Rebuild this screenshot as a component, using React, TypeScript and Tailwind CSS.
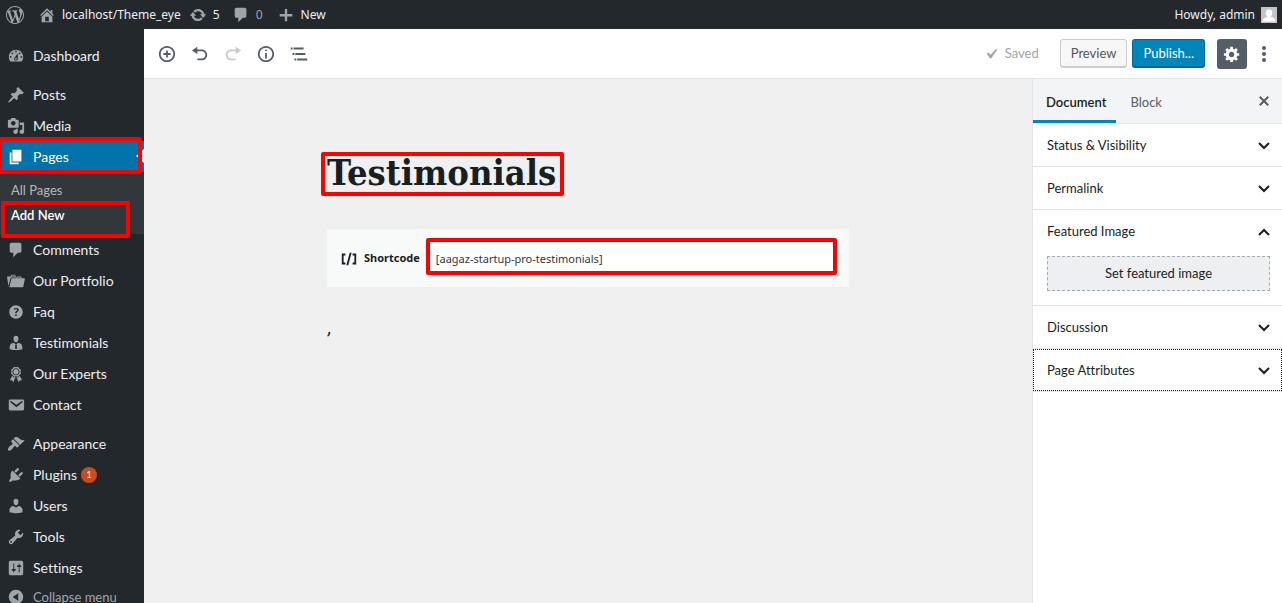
import { useState, type ReactNode } from "react";

const PATHS = {
  wordpress:
    "M20 10c0-5.51-4.49-10-10-10C4.48 0 0 4.49 0 10c0 5.52 4.48 10 10 10 5.51 0 10-4.48 10-10zM7.78 15.37L4.37 6.22c.55-.02 1.17-.08 1.17-.08.5-.06.44-1.13-.06-1.11 0 0-1.45.11-2.37.11-.18 0-.37 0-.58-.01C4.12 2.69 6.87 1.11 10 1.11c2.33 0 4.45.87 6.05 2.34-.68-.11-1.65.39-1.65 1.58 0 .74.45 1.36.9 2.1.35.61.55 1.36.55 2.46 0 1.49-1.4 5-1.4 5l-3.03-8.37c.54-.02.82-.17.82-.17.5-.05.44-1.25-.06-1.22 0 0-1.44.12-2.38.12-.87 0-2.33-.12-2.33-.12-.5-.03-.56 1.2-.06 1.22l.92.08 1.26 3.41zM17.41 10c.24-.64.74-1.87.43-4.25.7 1.29 1.05 2.71 1.05 4.25 0 3.29-1.73 6.24-4.4 7.78.97-2.59 1.94-5.2 2.92-7.78zM6.1 18.09C3.12 16.65 1.11 13.53 1.11 10c0-1.3.23-2.48.72-3.59C3.25 10.3 4.67 14.2 6.1 18.09zm4.03-6.63l2.58 6.98c-.86.29-1.76.45-2.71.45-.79 0-1.57-.11-2.29-.33.81-2.38 1.62-4.74 2.42-7.1z",
  home: "M16 8.5l1.53 1.53-1.06 1.06L10 4.6l-6.47 6.49-1.06-1.06L10 2.5l4 4v-2h2v4zm-6-2.46l6 5.99V18H4v-5.97zM12 17v-5H8v5h4z",
  update:
    "M10.2 3.28c3.53 0 6.43 2.61 6.92 6h2.08l-3.5 4-3.5-4h2.32c-.45-1.97-2.21-3.45-4.32-3.45-1.45 0-2.73.71-3.54 1.78L4.95 5.66C6.23 4.2 8.11 3.28 10.2 3.28zm-.4 13.44c-3.52 0-6.43-2.61-6.92-6H.8l3.5-4c1.17 1.33 2.33 2.67 3.5 4H5.48c.45 1.97 2.21 3.45 4.32 3.45 1.45 0 2.73-.71 3.54-1.78l1.71 1.95c-1.28 1.46-3.15 2.38-5.25 2.38z",
  plus: "M17 9v2.6h-5.7V17H8.7v-5.4H3V9h5.7V3.2h2.6V9z",
  dashboard:
    "M3.76 16h12.48c1.1-1.37 1.76-3.11 1.76-5 0-4.42-3.58-8-8-8s-8 3.58-8 8c0 1.89.66 3.63 1.76 5zM10 4c.55 0 1 .45 1 1s-.45 1-1 1-1-.45-1-1 .45-1 1-1zM6 6c.55 0 1 .45 1 1s-.45 1-1 1-1-.45-1-1 .45-1 1-1zm8 0c.55 0 1 .45 1 1s-.45 1-1 1-1-.45-1-1 .45-1 1-1zm-5.37 5.55L12 7v6c0 1.1-.9 2-2 2s-2-.9-2-2c0-.57.24-1.08.63-1.45zM4 10c.55 0 1 .45 1 1s-.45 1-1 1-1-.45-1-1 .45-1 1-1zm12 0c.55 0 1 .45 1 1s-.45 1-1 1-1-.45-1-1 .45-1 1-1zm-5 3c0-.55-.45-1-1-1s-1 .45-1 1 .45 1 1 1 1-.45 1-1z",
  post: "M10.44 3.02l1.82-1.82 6.36 6.35-1.83 1.82c-1.05-.68-2.48-.57-3.41.36l-.75.75c-.92.93-1.04 2.35-.35 3.41l-1.83 1.82-2.41-2.41-2.8 2.79c-.42.42-3.38 2.71-3.8 2.29s1.86-3.39 2.28-3.81l2.79-2.79L4.1 9.36l1.83-1.82c1.05.69 2.48.57 3.4-.36l.75-.75c.93-.92 1.05-2.35.36-3.41z",
  media:
    "M13 11V4c0-.55-.45-1-1-1h-1.67L9 1H5L3.67 3H2c-.55 0-1 .45-1 1v7c0 .55.45 1 1 1h10c.55 0 1-.45 1-1zM7 4.5c1.38 0 2.5 1.12 2.5 2.5S8.38 9.5 7 9.5 4.5 8.38 4.5 7 5.62 4.5 7 4.5zM14 6h5v10.5c0 1.38-1.12 2.5-2.5 2.5S14 17.88 14 16.5s1.12-2.5 2.5-2.5c.17 0 .34.02.5.05V9h-3V6zm-4 8.05V13h2v3.5c0 1.38-1.12 2.5-2.5 2.5S7 17.88 7 16.5 8.12 14 9.5 14c.17 0 .34.02.5.05z",
  page: "M6 15V2h10v13H6zm-1 1h8v2H3V5h2v11z",
  comment:
    "M5 2h9c1.1 0 2 .9 2 2v7c0 1.1-.9 2-2 2h-2l-5 5v-5H5c-1.1 0-2-.9-2-2V4c0-1.1.9-2 2-2z",
  portfolio:
    "M4 5H.78c-.37 0-.74.32-.69.84l1.56 9.99S3.5 8.47 3.86 6.7c.11-.53.61-.7.98-.7H10s-.7-2.08-.77-2.31C9.11 3.25 8.89 3 8.45 3H5.14c-.36 0-.7.23-.8.64C4.25 4.04 4 5 4 5zm4.88 0h-4s.42-1 .87-1h2.13c.48 0 1 1 1 1zM2.67 16.25c-.31.47-.76.75-1.26.75h15.73c.54 0 .92-.31 1.03-.83.44-2.19 1.68-8.44 1.68-8.44.07-.5-.3-.73-.62-.73H16V5.53c0-.16-.26-.53-.66-.53h-3.76c-.52 0-.87.58-.87.58L10 7H5.59c-.32 0-.63.19-.69.5 0 0-1.59 6.7-1.72 7.33-.07.37-.22.99-.51 1.42zM15.38 7H11s.58-1 1.13-1h2.29c.71 0 .96 1 .96 1z",
  help: "M17.500 10c0-4.140-3.360-7.500-7.500-7.500s-7.500 3.360-7.500 7.500 3.360 7.500 7.500 7.500 7.500-3.360 7.500-7.500zm-6.800 1.480H9.140v-.43c0-.38.08-.7.24-.98s.46-.57.88-.89c.41-.29.68-.53.81-.71.14-.18.2-.39.2-.62 0-.25-.09-.44-.28-.58-.19-.13-.45-.19-.79-.19-.58 0-1.25.19-2 .57l-.64-1.28c.87-.49 1.8-.74 2.77-.74.81 0 1.45.2 1.92.58.48.39.71.91.71 1.55 0 .43-.09.8-.29 1.11-.19.32-.57.67-1.11 1.06-.38.28-.61.49-.71.63-.1.15-.15.34-.15.57v.35zm-1.47 2.74c-.18-.17-.27-.42-.27-.73 0-.33.08-.58.26-.75s.43-.25.77-.25c.32 0 .57.09.75.26s.27.42.27.74c0 .3-.09.55-.27.72-.18.18-.43.27-.75.27-.33 0-.58-.09-.76-.26z",
  business:
    "M7.3 6l-.03-.19c-.04-.37-.05-.73-.03-1.08.02-.36.1-.71.25-1.04.14-.32.31-.61.52-.86s.49-.46.83-.6c.34-.15.72-.23 1.13-.23.69 0 1.26.2 1.71.59s.76.87.91 1.44.18 1.16.09 1.78l-.03.19c-.01.09-.05.25-.11.48-.05.24-.12.47-.2.69-.08.21-.19.45-.34.72-.14.27-.3.49-.47.69-.18.19-.4.34-.67.48-.27.13-.55.19-.86.19s-.59-.06-.87-.19c-.26-.13-.49-.29-.67-.5-.18-.2-.34-.42-.49-.66-.15-.25-.26-.49-.34-.73-.09-.25-.16-.47-.21-.67-.06-.21-.1-.37-.12-.5zm9.2 6.24c.41.7.5 1.41.5 2.14v2.49c0 .03-.12.08-.29.13-.18.04-.42.13-.97.27-.55.12-1.1.24-1.65.34s-1.19.19-1.95.27c-.75.08-1.46.12-2.13.12-.68 0-1.39-.04-2.14-.12-.75-.07-1.4-.17-1.98-.27-.58-.11-1.08-.23-1.56-.34-.49-.11-.8-.21-1.06-.29L3 16.87v-2.49c0-.75.07-1.46.46-2.15s.81-1.25 1.5-1.68C5.66 10.12 7.19 10 8 10l1.67 1.67L9 13v3l1.02 1.08L11 16v-3l-.68-1.33L11.97 10c.77 0 2.2.07 2.9.52.71.45 1.21 1.02 1.63 1.72z",
  awards:
    "M4.46 5.16L5 7.46l-.54 2.29 2.01 1.24L7.7 13l2.3-.54 2.3.54 1.23-2.01 2.01-1.24L15 7.46l.54-2.3-2-1.24-1.24-2.01-2.3.55-2.29-.54-1.25 2zm5.55 6.34c-2.21 0-4-1.79-4-4 0-2.2 1.79-4 4-4s4 1.8 4 4c0 2.21-1.79 4-4 4zm-.02-1C8.33 10.5 7 9.16 7 7.5c0-1.65 1.33-3 2.99-3S13 5.85 13 7.5c0 1.66-1.35 3-3.01 3zm3.84 1.1l-1.28 2.24-2.08-.47L13 19.2l1.4-2.2h2.5zm-7.7.07l1.25 2.25 2.13-.51L7 19.2 5.6 17H3.1z",
  email:
    "M3.87 4h13.25C18.37 4 19 4.59 19 5.79v8.42c0 1.19-.63 1.79-1.88 1.79H3.87c-1.25 0-1.88-.6-1.88-1.79V5.79c0-1.2.63-1.79 1.88-1.79zm6.62 8.6l6.74-5.53c.24-.2.43-.66.13-1.07-.29-.41-.82-.42-1.17-.17l-5.7 3.86L4.8 5.83c-.35-.25-.88-.24-1.17.17-.3.41-.11.87.13 1.07z",
  appearance:
    "M14.48 11.06L7.41 3.99l1.5-1.5c.5-.56 2.3-.47 3.51.32 1.21.8 1.43 1.28 2.91 2.1 1.18.64 2.45 1.26 4.45.85zm-.71.71L6.7 4.7 4.93 6.47c-.39.39-.39 1.02 0 1.41l1.06 1.06c.39.39.39 1.03 0 1.42-.6.6-1.43 1.11-2.21 1.69-.35.26-.7.53-1.01.84C1.43 14.23.4 16.08 1.4 17.07c.99 1 2.84-.03 4.18-1.36.31-.31.58-.66.85-1.02.57-.78 1.08-1.61 1.69-2.21.39-.39 1.02-.39 1.41 0l1.06 1.06c.39.39 1.02.39 1.41 0z",
  plugins:
    "M13.11 4.36L9.87 7.6 8 5.73l3.24-3.24c.35-.34 1.05-.2 1.56.32.52.51.66 1.21.31 1.55zm-8 1.77l.91-1.12 9.01 9.01-1.19.84c-.71.71-2.63 1.16-3.82 1.16H6.14L4.9 17.26c-.59.59-1.54.59-2.12 0-.59-.58-.59-1.53 0-2.12l1.24-1.24v-3.88c0-1.13.4-3.19 1.09-3.89zm7.26 3.97l3.24-3.24c.34-.35 1.04-.21 1.55.31.52.51.66 1.21.31 1.55l-3.24 3.25z",
  users:
    "M10 9.25c-2.27 0-2.73-3.44-2.73-3.44C7 4.02 7.82 2 9.97 2c2.16 0 2.98 2.02 2.71 3.81 0 0-.41 3.44-2.68 3.44zm0 2.57L12.72 10c2.39 0 4.52 2.33 4.52 4.53v2.49s-3.65 1.13-7.24 1.13c-3.65 0-7.24-1.13-7.24-1.13v-2.49c0-2.25 1.94-4.48 4.47-4.48z",
  tools:
    "M16.68 9.77c-1.34 1.34-3.3 1.67-4.95.99l-5.41 6.52c-.99.99-2.59.99-3.58 0s-.99-2.59 0-3.57l6.52-5.42c-.68-1.65-.35-3.61.99-4.95 1.28-1.28 3.12-1.62 4.72-1.06l-2.89 2.89 2.82 2.82 2.86-2.87c.53 1.58.18 3.39-1.08 4.65zM3.81 16.21c.4.39 1.04.39 1.43 0 .4-.4.4-1.04 0-1.43-.39-.4-1.03-.4-1.43 0-.39.39-.39 1.03 0 1.43z",
  settings:
    "M18 16V4c0-1.1-.9-2-2-2H4c-1.1 0-2 .9-2 2v12c0 1.1.9 2 2 2h12c1.1 0 2-.9 2-2zM8 11h1c.55 0 1 .45 1 1s-.45 1-1 1H8v1.5c0 .28-.22.5-.5.5s-.5-.22-.5-.5V13H6c-.55 0-1-.45-1-1s.45-1 1-1h1V5.5c0-.28.22-.5.5-.5s.5.22.5.5V11zm5-2h-1c-.55 0-1-.45-1-1s.45-1 1-1h1V5.5c0-.28.22-.5.5-.5s.5.22.5.5V7h1c.55 0 1 .45 1 1s-.45 1-1 1h-1v5.5c0 .28-.22.5-.5.5s-.5-.22-.5-.5V9z",
  collapse:
    "M10 2c4.42 0 8 3.58 8 8s-3.58 8-8 8-8-3.58-8-8 3.58-8 8-8zm2.5 12.2V5.8L6.3 10z",
  insert:
    "M10 1c-5 0-9 4-9 9s4 9 9 9 9-4 9-9-4-9-9-9zm0 16c-3.9 0-7-3.1-7-7s3.1-7 7-7 7 3.1 7 7-3.1 7-7 7zm1-11H9v3H6v2h3v3h2v-3h3V9h-3V6z",
  undo: "M12 5H7V2L1 6l6 4V7h5c2.2 0 4 1.8 4 4s-1.8 4-4 4H7v2h5c3.3 0 6-2.7 6-6s-2.7-6-6-6z",
  redo: "M8 5h5V2l6 4-6 4V7H8c-2.2 0-4 1.8-4 4s1.8 4 4 4h5v2H8c-3.3 0-6-2.7-6-6s2.7-6 6-6z",
  info: "M9 15h2V9H9v6zm1-10c-.5 0-1 .5-1 1s.5 1 1 1 1-.5 1-1-.5-1-1-1zm0-4c-5 0-9 4-9 9s4 9 9 9 9-4 9-9-4-9-9-9zm0 16c-3.9 0-7-3.1-7-7s3.1-7 7-7 7 3.1 7 7-3.1 7-7 7z",
  gear: "M18 12h-2.18c-.17.7-.44 1.35-.81 1.93l1.54 1.54-2.1 2.1-1.54-1.54c-.58.36-1.23.63-1.91.79V19H8v-2.18c-.68-.16-1.33-.43-1.91-.79l-1.54 1.54-2.12-2.12 1.54-1.54c-.36-.58-.63-1.23-.79-1.91H1V9.03h2.17c.16-.7.44-1.35.8-1.94L2.43 5.55l2.1-2.1 1.54 1.54c.58-.37 1.24-.64 1.93-.81V2h3v2.18c.68.16 1.33.43 1.91.79l1.54-1.54 2.12 2.12-1.54 1.54c.36.59.64 1.24.8 1.94H18V12zm-8.5 1.5c1.66 0 3-1.34 3-3s-1.34-3-3-3-3 1.34-3 3 1.34 3 3 3z",
  check: "M14.83 4.89l1.34.94-5.81 8.38H9.02L5.78 9.67l1.34-1.25 2.57 2.4z",
  close:
    "M14.95 6.46L11.41 10l3.54 3.54-1.41 1.41L10 11.42l-3.53 3.53-1.42-1.42L8.58 10 5.05 6.47l1.42-1.42L10 8.58l3.54-3.53z",
  shortcode: "M6 14H4V6h2V4H2v12h4M7.1 17h2.1l3.7-14h-2.1M14 4v2h2v8h-2v2h4V4",
};

type IconName = keyof typeof PATHS;

function Icon({ name, className = "size-[18px]" }: { name: IconName; className?: string }) {
  return (
    <svg viewBox="0 0 20 20" fill="currentColor" aria-hidden="true" className={`shrink-0 ${className}`}>
      <path fillRule={name === "dashboard" ? "evenodd" : "nonzero"} d={PATHS[name]} />
    </svg>
  );
}

function Marker({ className }: { className: string }) {
  return (
    <span
      aria-hidden="true"
      className={`pointer-events-none absolute z-10 rounded-[2px] border-4 border-[#ff0000] ${className}`}
    />
  );
}

function MenuItem({
  icon,
  label,
  badge,
  active = false,
}: {
  icon: IconName;
  label: string;
  badge?: number;
  active?: boolean;
}) {
  return (
    <li className="relative">
      <a
        href="#"
        aria-current={active ? "page" : undefined}
        className={`flex h-[31px] items-center gap-2 pl-[7px] ${active ? "bg-[#0073aa] text-white" : "text-[#eee]"}`}
      >
        <span className={`flex ${active ? "text-white" : "text-[#a0a5aa]"}`}>
          <Icon name={icon} />
        </span>
        {label}
        {badge !== undefined && (
          <span className="-ml-1 flex size-4 items-center justify-center rounded-full bg-[#ca4a1f] text-[9px] text-white">
            {badge}
          </span>
        )}
      </a>
      {active && (
        <>
          <svg viewBox="0 0 8 14" aria-hidden="true" className="absolute top-2 right-0 h-3.5 w-2 fill-[#f1f1f1]">
            <path d="M8 0v14L0 7z" />
          </svg>
          <Marker className="-top-1 -bottom-0.5 -left-0.5 right-0.5" />
        </>
      )}
    </li>
  );
}

function Sidebar() {
  return (
    <nav
      aria-label="Main menu"
      className="w-36 shrink-0 overflow-hidden bg-[#23282d] pt-[11px] text-[14px]"
    >
      <ul>
        <MenuItem icon="dashboard" label="Dashboard" />
      </ul>
      <ul className="mt-2">
        <MenuItem icon="post" label="Posts" />
        <MenuItem icon="media" label="Media" />
        <MenuItem icon="page" label="Pages" active />
      </ul>
      <ul className="bg-[#32373c] py-1.5 text-[13px]">
        <li>
          <a href="#" className="flex h-[25px] items-center pl-[11px] text-[#b4b9be]">
            All Pages
          </a>
        </li>
        <li className="relative">
          <a href="#" className="flex h-[25px] items-center pl-[11px] font-semibold text-white">
            Add New
          </a>
          <Marker className="-top-0.5 -bottom-2.5 left-px right-3.5" />
        </li>
      </ul>
      <ul>
        <MenuItem icon="comment" label="Comments" />
        <MenuItem icon="portfolio" label="Our Portfolio" />
        <MenuItem icon="help" label="Faq" />
        <MenuItem icon="business" label="Testimonials" />
        <MenuItem icon="awards" label="Our Experts" />
        <MenuItem icon="email" label="Contact" />
      </ul>
      <ul className="mt-2">
        <MenuItem icon="appearance" label="Appearance" />
        <MenuItem icon="plugins" label="Plugins" badge={1} />
        <MenuItem icon="users" label="Users" />
        <MenuItem icon="tools" label="Tools" />
        <MenuItem icon="settings" label="Settings" />
      </ul>
      <button
        type="button"
        className="flex h-7 w-full items-center gap-2 pl-[7px] text-[13px] leading-none text-[#a0a5aa]"
      >
        <Icon name="collapse" />
        Collapse menu
      </button>
    </nav>
  );
}

function AdminBar() {
  return (
    <header className="flex h-[29px] shrink-0 items-center bg-[#23282d] pr-[5px] pl-1.5 font-['Noto_Sans','Open_Sans',sans-serif] text-[12px] text-[#eee]">
      <a href="#" aria-label="About WordPress" className="text-[#a0a5aa]">
        <Icon name="wordpress" />
      </a>
      <a href="#" className="ml-3.5 flex items-center gap-1.5">
        <Icon name="home" className="size-[18px] text-[#a0a5aa]" />
        localhost/Theme_eye
      </a>
      <a href="#" className="ml-2 flex items-center gap-1.5">
        <Icon name="update" className="size-[18px] text-[#a0a5aa]" />5
      </a>
      <a href="#" className="ml-3 flex items-center gap-1.5 text-[#a0a5aa]">
        <Icon name="comment" />0
      </a>
      <a href="#" className="ml-3.5 flex items-center gap-1.5">
        <Icon name="plus" className="size-[18px] text-[#a0a5aa]" />
        New
      </a>
      <a href="#" className="ml-auto flex items-center gap-1.5">
        Howdy, admin
        <svg viewBox="0 0 16 16" aria-hidden="true" className="size-4">
          <path fill="#c5c5c5" d="M0 0h16v16H0z" />
          <path
            fill="#fff"
            d="M8 2.4c2 0 3.3 1.4 3.3 3.4 0 1.4-.6 2.7-1.5 3.4v.8c2.6.5 4.2 1.5 4.7 4.5H1.500c.5-3 2.1-4 4.7-4.5v-.8C5.300 8.500 4.700 7.200 4.700 5.800c0-2 1.300-3.400 3.300-3.400z"
          />
        </svg>
      </a>
    </header>
  );
}

function ToolButton({ label, children, disabled }: { label: string; children: ReactNode; disabled?: boolean }) {
  return (
    <button
      type="button"
      aria-label={label}
      disabled={disabled}
      className="flex size-[33px] items-center justify-center text-[#555d66] disabled:text-[#c8cbce]"
    >
      {children}
    </button>
  );
}

function Toolbar() {
  return (
    <div className="flex h-[50px] shrink-0 items-center border-b border-[#e2e4e7] bg-white pr-[9px] pl-1.5 text-[13px]">
      <ToolButton label="Add block">
        <Icon name="insert" />
      </ToolButton>
      <ToolButton label="Undo">
        <Icon name="undo" />
      </ToolButton>
      <ToolButton label="Redo" disabled>
        <Icon name="redo" />
      </ToolButton>
      <ToolButton label="Content structure">
        <Icon name="info" />
      </ToolButton>
      <ToolButton label="Block navigation">
        <svg viewBox="0 0 24 24" fill="currentColor" aria-hidden="true" className="size-[22px]">
          <path d="M5 5H3v2h2V5zm3 8h11v-2H8v2zm9-8H6v2h11V5zM7 11H5v2h2v-2zm0 8h2v-2H7v2zm3-2v2h11v-2H10z" />
        </svg>
      </ToolButton>
      <span className="ml-auto flex items-center gap-1 pt-px text-[#a0a5aa]">
        <Icon name="check" className="size-5" />
        Saved
      </span>
      <button
        type="button"
        className="ml-[21px] h-[29px] rounded-[3px] border border-b-2 border-[#ccc] bg-[#f7f7f7] px-2.5 pt-0.5 text-[#555]"
      >
        Preview
      </button>
      <button
        type="button"
        className="ml-[5px] h-[29px] rounded-[3px] border border-b-2 border-[#006799] bg-[#0085ba] px-2.5 pt-0.5 text-white"
      >
        Publish...
      </button>
      <button
        type="button"
        aria-label="Settings"
        aria-pressed="true"
        className="ml-3 flex size-[30px] items-center justify-center rounded-[3px] bg-[#555d66] text-white"
      >
        <Icon name="gear" />
      </button>
      <button type="button" aria-label="More options" className="ml-2 flex size-[18px] items-center justify-center">
        <svg viewBox="0 0 18 18" aria-hidden="true" className="size-[18px] fill-[#555d66]">
          <circle cx="9" cy="3" r="2" />
          <circle cx="9" cy="9" r="2" />
          <circle cx="9" cy="15" r="2" />
        </svg>
      </button>
    </div>
  );
}

function Panel({
  title,
  open = false,
  focused = false,
  children,
}: {
  title: string;
  open?: boolean;
  focused?: boolean;
  children?: ReactNode;
}) {
  const [expanded, setExpanded] = useState(open);
  return (
    <section className="border-b border-[#e2e4e7]">
      <button
        type="button"
        aria-expanded={expanded}
        onClick={() => setExpanded(!expanded)}
        className={`flex h-[42px] w-full items-center justify-between pt-0.5 pr-2 pl-3.5 ${
          focused ? "outline-1 -outline-offset-1 outline-dotted outline-[#191e23]" : ""
        }`}
      >
        {title}
        <svg
          viewBox="0 0 20 20"
          aria-hidden="true"
          className={`size-5 fill-none stroke-current stroke-2 ${expanded ? "rotate-180" : ""}`}
        >
          <path d="M5 7l5 5 5-5" />
        </svg>
      </button>
      {expanded && children}
    </section>
  );
}

function SettingsPanel() {
  return (
    <aside className="w-[250px] shrink-0 border-l border-[#e2e4e7] bg-white text-[13px] text-[#191e23]">
      <div className="flex h-[45px] border-b border-[#e2e4e7] bg-[#f3f4f5]">
        <button type="button" className="border-b-3 border-[#0085ba] pt-1.5 pr-2.5 pl-[13px] font-semibold">
          Document
        </button>
        <button type="button" className="px-3.5 pt-[3px] text-[#555d66]">
          Block
        </button>
        <button type="button" aria-label="Close settings" className="mr-2 ml-auto text-[#555d66]">
          <Icon name="close" className="size-5" />
        </button>
      </div>
      <Panel title="Status &amp; Visibility" />
      <Panel title="Permalink" />
      <Panel title="Featured Image" open>
        <div className="pt-1 pr-3 pb-3.5 pl-3.5">
          <button
            type="button"
            className="h-[35px] w-full border border-dashed border-[#a2aab2] bg-[#edeff0]"
          >
            Set featured image
          </button>
        </div>
      </Panel>
      <Panel title="Discussion" />
      <Panel title="Page Attributes" focused />
    </aside>
  );
}

function Canvas() {
  return (
    <main className="min-w-0 flex-1 bg-[#f0f0f0] px-6 pt-[70px]">
      <div className="mx-auto max-w-[522px] font-['DejaVu_Serif_Condensed','DejaVu_Serif',serif] text-[#191e23]">
        <h1 className="relative w-fit text-[36px] leading-[46px] font-bold">
          Testimonials
          <Marker className="top-[3px] -right-2 -bottom-px -left-1.5" />
        </h1>
        <div className="mt-[34px] flex h-[58px] items-center bg-[#f8f9f9] pr-4 pb-[3px] pl-[13px] font-['Noto_Sans','Open_Sans',sans-serif] text-[11px]">
          <label htmlFor="shortcode" className="flex shrink-0 items-center gap-1.5 pt-1 font-bold">
            <Icon name="shortcode" />
            Shortcode
          </label>
          <div className="relative ml-2.5 min-w-0 flex-1">
            <input
              id="shortcode"
              type="text"
              defaultValue="[aagaz-startup-pro-testimonials]"
              className="block h-[29px] w-full bg-white px-1.5 pt-[3px] text-[#32373c] outline-none"
            />
            <Marker className="-inset-1" />
          </div>
        </div>
        <p className="mt-8 text-[14px] leading-5 font-bold">,</p>
      </div>
    </main>
  );
}

export default function App() {
  return (
    <div className="flex h-screen flex-col overflow-hidden font-['Lato','Open_Sans',sans-serif] [font-variant-ligatures:none]">
      <AdminBar />
      <div className="flex min-h-0 flex-1">
        <Sidebar />
        <div className="flex min-w-0 flex-1 flex-col">
          <Toolbar />
          <div className="flex min-h-0 flex-1">
            <Canvas />
            <SettingsPanel />
          </div>
        </div>
      </div>
    </div>
  );
}
